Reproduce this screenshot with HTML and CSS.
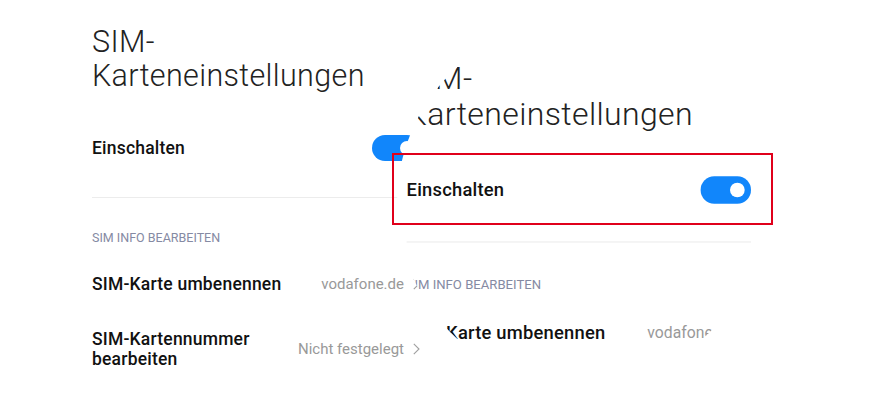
FILE: index.html
```html
<!DOCTYPE html>
<html lang="de">
<head>
<meta charset="utf-8">
<title>SIM-Karteneinstellungen</title>
<link rel="stylesheet" href="styles.css">
</head>
<body>
<div class="stage">
  <div class="screen">
    <h1 class="title">SIM-<br>Karteneinstellungen</h1>
    <div class="row-toggle">
      <span class="label">Einschalten</span>
      <span class="toggle"><span class="knob"></span></span>
    </div>
    <div class="divider"></div>
    <div class="section">SIM Info bearbeiten</div>
    <div class="row">
      <span class="label">SIM-Karte umbenennen</span>
      <span class="value">vodafone.de<svg class="chev" width="7" height="12" viewBox="0 0 7 12"><polyline points="0.8,0.8 6,6 0.8,11.2" fill="none" stroke="#a0a0a0" stroke-width="1.1"/></svg></span>
    </div>
    <div class="row">
      <span class="label label--wrap">SIM-Kartennummer bearbeiten</span>
      <span class="value">Nicht festgelegt<svg class="chev" width="7" height="12" viewBox="0 0 7 12"><polyline points="0.8,0.8 6,6 0.8,11.2" fill="none" stroke="#a0a0a0" stroke-width="1.1"/></svg></span>
    </div>
  </div>

  <div class="lens">
    <div class="screen screen--zoomed">
      <h1 class="title">SIM-<br>Karteneinstellungen</h1>
      <div class="row-toggle">
        <span class="label">Einschalten</span>
        <span class="toggle"><span class="knob"></span></span>
      </div>
      <div class="divider"></div>
      <div class="section">SIM Info bearbeiten</div>
      <div class="row">
        <span class="label">SIM-Karte umbenennen</span>
        <span class="value">vodafone.de<svg class="chev" width="7" height="12" viewBox="0 0 7 12"><polyline points="0.8,0.8 6,6 0.8,11.2" fill="none" stroke="#a0a0a0" stroke-width="1.1"/></svg></span>
      </div>
    </div>
  </div>

  <div class="highlight"></div>
</div>
</body>
</html>
```

FILE: styles.css
```css
html, body {
  margin: 0;
  background: #fff;
  font-family: Roboto, "Noto Sans", "Liberation Sans", sans-serif;
}

.stage {
  position: relative;
  width: 879px;
  height: 400px;
  overflow: hidden;
  background: #fff;
}

.screen {
  width: 328px;
  padding: 25px 0 0 92px;
}

.title {
  margin: 0;
  font-weight: 300;
  font-size: 30.5px;
  line-height: 34px;
  letter-spacing: 0.35px;
  color: #222;
}

.row-toggle {
  display: flex;
  align-items: center;
  justify-content: space-between;
  height: 80px;
  margin-top: 15px;
}

.label {
  font-size: 17.5px;
  font-weight: 500;
  line-height: 22px;
  letter-spacing: 0.2px;
  color: #111;
}

.label--wrap {
  max-width: 180px;
  line-height: 20px;
}

.toggle {
  display: flex;
  align-items: center;
  justify-content: flex-end;
  box-sizing: border-box;
  width: 48px;
  height: 26px;
  padding: 0 6px;
  border-radius: 13px;
  background: #1186fb;
}

.knob {
  width: 14px;
  height: 14px;
  border-radius: 50%;
  background: #fff;
}

.divider {
  height: 1px;
  margin-top: 9px;
  background: #ececec;
}

.section {
  margin: 32px 0 10px;
  font-size: 12.5px;
  line-height: 16px;
  color: #858aa3;
  text-transform: uppercase;
}

.row {
  display: flex;
  align-items: center;
  justify-content: space-between;
  padding: 17px 0;
}

.value {
  display: flex;
  align-items: center;
  gap: 9px;
  font-size: 15px;
  line-height: 20px;
  color: #999;
}

.chev {
  display: block;
}

/* magnifier */
.lens {
  position: absolute;
  left: 397px;
  top: 20px;
  width: 366px;
  height: 366px;
  border-radius: 50%;
  overflow: hidden;
  background: #fff;
}

.screen--zoomed {
  position: absolute;
  left: 0;
  top: 0;
  transform-origin: 0 0;
  transform: translate(-87px, 14.6px) scale(1.05);
}

.highlight {
  position: absolute;
  left: 392px;
  top: 153px;
  width: 381px;
  height: 72px;
  box-sizing: border-box;
  border: 2px solid #e0001b;
}
```
